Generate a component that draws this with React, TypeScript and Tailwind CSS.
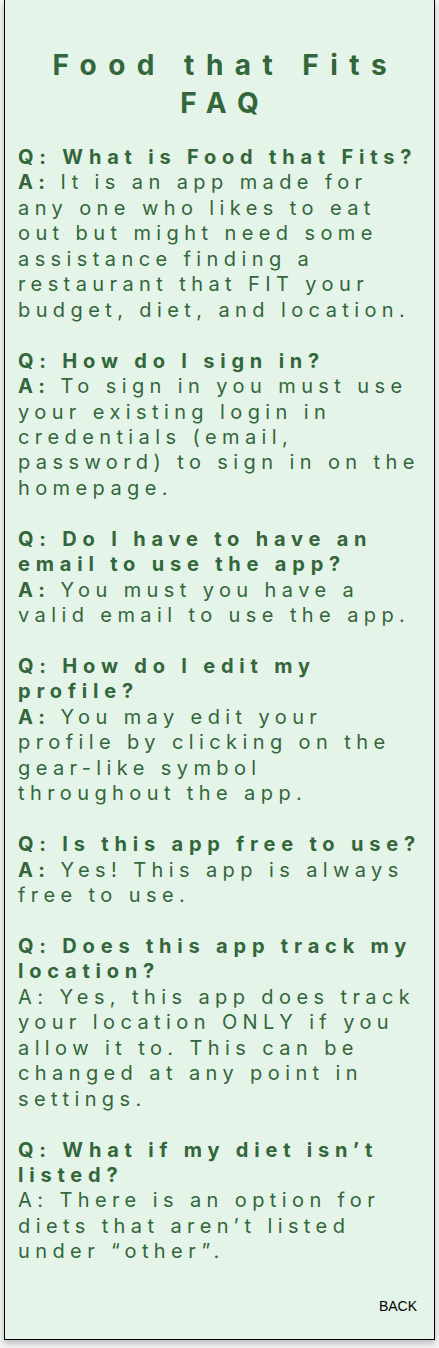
import React from 'react';

type Faq = {
  q: React.ReactNode;
  a: React.ReactNode;
  boldA?: boolean;
};

const faqs: Faq[] = [
  {
    q: 'Q: What is Food that Fits?',
    a: (
      <>
        It is an app made for<br />any one who likes to eat<br />out but might need some<br />assistance finding a<br />
        restaurant that FIT your<br />budget, diet, and location.
      </>
    ),
    boldA: true,
  },
  {
    q: 'Q: How do I sign in?',
    a: (
      <>
        To sign in you must use<br />your existing login in<br />credentials (email,<br />password) to sign in on the<br />homepage.
      </>
    ),
    boldA: true,
  },
  {
    q: (
      <>
        Q: Do I have to have an<br />email to use the app?
      </>
    ),
    a: (
      <>
        You must you have a<br />valid email to use the app.
      </>
    ),
    boldA: true,
  },
  {
    q: (
      <>
        Q: How do I edit my<br />profile?
      </>
    ),
    a: (
      <>
        You may edit your<br />profile by clicking on the<br />gear-like symbol<br />throughout the app.
      </>
    ),
    boldA: true,
  },
  {
    q: 'Q: Is this app free to use?',
    a: (
      <>
        Yes! This app is always<br />free to use.
      </>
    ),
    boldA: true,
  },
  {
    q: (
      <>
        Q: Does this app track my<br />location?
      </>
    ),
    a: (
      <>
        A: Yes, this app does track<br />your location ONLY if you<br />allow it to. This can be<br />changed at any point in<br />settings.
      </>
    ),
  },
  {
    q: (
      <>
        Q: What if my diet isn’t<br />listed?
      </>
    ),
    a: (
      <>
        A: There is an option for<br />diets that aren’t listed<br />under “other”.
      </>
    ),
  },
];

const App: React.FC = () => {
  return (
    <div className="w-[439px] h-[1348px] bg-[#f4f4f4] overflow-hidden">
      <div className="ml-[4px] w-[431px] h-[1340px] border border-t-0 border-black bg-[#e5f4e8] shadow-[0_3px_6px_rgba(0,0,0,0.25)] flex flex-col">
        {/* Header */}
        <h1 className="pt-[46px] text-center text-[28px] leading-[38px] font-bold tracking-[0.41em] pl-[0.41em] text-[#33663a] font-['Inter',sans-serif]">
          Food that Fits<br />FAQ
        </h1>

        <div className="mt-[23px] pl-[13px] text-[20px] leading-[25.45px] tracking-[0.27em] text-[#33663a] font-['Inter',sans-serif] whitespace-nowrap">
          {faqs.map((f, i) => (
            <div key={i} className="mb-[25.45px]">
              <p className="font-bold tracking-[0.29em]">{f.q}</p>
              <p>
                {f.boldA && <span className="font-bold">A: </span>}
                {f.a}
              </p>
            </div>
          ))}
        </div>

        <div className="mt-[6px] pr-[17px] text-right text-[14px] text-black font-['Liberation_Sans',sans-serif]">
          BACK
        </div>
      </div>
    </div>
  );
};

export default App;
